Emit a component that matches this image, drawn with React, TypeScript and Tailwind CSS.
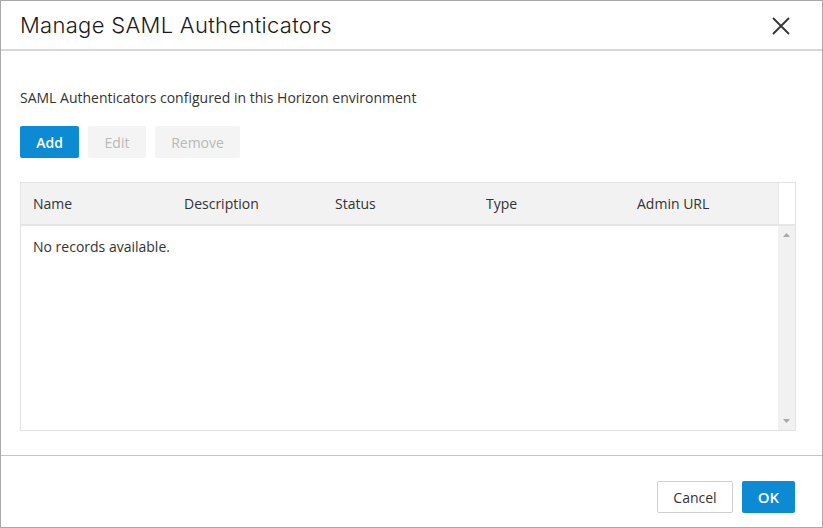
import React from "react";

export default function App() {
  const cols = ["Name", "Description", "Status", "Type", "Admin URL"];
  return (
    <div className="w-[823px] h-[528px] bg-white border border-[#a9a9a9] flex flex-col" style={{ fontFamily: "'Open Sans', sans-serif" }}>
      <div className="h-[50px] flex items-center justify-between pl-[19px] pr-[31px] border-b-2 border-[#d8d8d8] shrink-0">
        <div className="text-[22px] font-light text-[#1b1b1b] tracking-[0.3px]" style={{ fontFamily: "Inter, sans-serif" }}>Manage SAML Authenticators</div>
        <svg width="20" height="20" viewBox="0 0 20 20" className="mt-[1px]">
          <path d="M2 2 L18 18 M18 2 L2 18" stroke="#333" strokeWidth="1.8" />
        </svg>
      </div>
      <div className="flex-1 px-[19px] pt-[37px] flex flex-col">
        <div className="text-[14px] text-[#333] leading-[20px]">SAML Authenticators configured in this Horizon environment</div>
        <div className="flex gap-[9px] mt-[18px]">
          <button className="w-[59px] h-[32px] bg-[#0c8ad4] text-white text-[14px] font-semibold rounded-[2px]">Add</button>
          <button className="w-[58px] h-[32px] bg-[#f4f4f4] text-[#b9b9b9] text-[14px] rounded-[2px]">Edit</button>
          <button className="w-[85px] h-[32px] bg-[#f4f4f4] text-[#b9b9b9] text-[14px] rounded-[2px]">Remove</button>
        </div>
        <div className="mt-[24px] w-[776px] h-[249px] border border-[#e2e2e2] flex flex-col">
          <div className="flex h-[43px] border-b-2 border-[#e6e6e6] shrink-0">
            <div className="flex-1 bg-[#f2f2f2] grid grid-cols-[151px_151px_151px_151px_1fr] items-center">
              {cols.map((c) => (
                <div key={c} className="pl-[12px] text-[14px] text-[#333]">{c}</div>
              ))}
            </div>
            <div className="w-[17px] bg-white border-l border-[#e8e8e8]" />
          </div>
          <div className="flex flex-1">
            <div className="flex-1 pl-[12px] pt-[10px] text-[14px] text-[#333]">No records available.</div>
            <div className="w-[17px] bg-[#f1f1f1] flex flex-col items-center justify-between py-[7px]">
              <svg width="7" height="4" viewBox="0 0 7 4"><path d="M0 4 L3.5 0 L7 4 Z" fill="#a8a8a8" /></svg>
              <svg width="7" height="4" viewBox="0 0 7 4"><path d="M0 0 L3.5 4 L7 0 Z" fill="#a8a8a8" /></svg>
            </div>
          </div>
        </div>
      </div>
      <div className="h-[72px] border-t border-[#c4c4c4] shrink-0 flex items-start justify-end pr-[27px] pt-[25px] gap-[9px]">
        <button className="w-[76px] h-[32px] bg-white border border-[#cfcfcf] text-[#333] text-[14px] rounded-[2px]">Cancel</button>
        <button className="w-[53px] h-[32px] bg-[#0c8ad4] text-white text-[15px] font-semibold rounded-[2px]">OK</button>
      </div>
    </div>
  );
}
